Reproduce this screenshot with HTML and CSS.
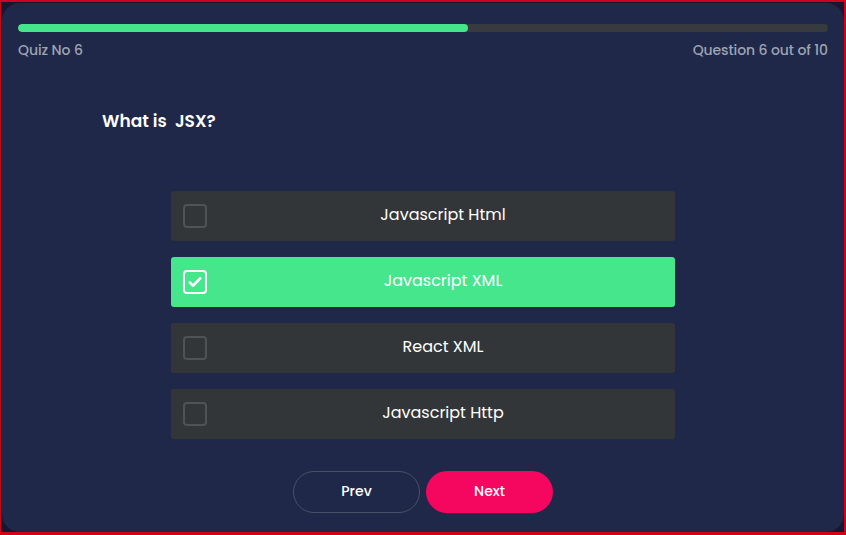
FILE: index.html
```html
<!DOCTYPE html>
<html>
<head>
<meta charset="utf-8">
<link rel="stylesheet" href="styles.css">
</head>
<body>
<div class="frame">
  <div class="card">
    <div class="progress"><div class="progress-fill" style="width:55.6%"></div></div>
    <div class="meta">
      <span>Quiz No 6</span>
      <span>Question 6 out of 10</span>
    </div>
    <h2 class="question">What is&nbsp; JSX?</h2>
    <div class="options">
      <div class="option"><span class="box"></span><span class="label">Javascript Html</span></div>
      <div class="option selected"><span class="box"><svg viewBox="0 0 24 24" width="18" height="18"><path d="M5 12.5l4.5 4.5L19 7" fill="none" stroke="#fff" stroke-width="3.4" stroke-linecap="round" stroke-linejoin="round"/></svg></span><span class="label">Javascript XML</span></div>
      <div class="option"><span class="box"></span><span class="label">React XML</span></div>
      <div class="option"><span class="box"></span><span class="label">Javascript Http</span></div>
    </div>
    <div class="nav">
      <button class="btn prev">Prev</button>
      <button class="btn next">Next</button>
    </div>
  </div>
</div>
</body>
</html>
```
FILE: styles.css
```css
html, body {
  margin: 0;
  padding: 0;
  background: #131935;
}
body {
  font-family: "Poppins", "Inter", "Open Sans", sans-serif;
}
.frame {
  width: 846px;
  height: 535px;
  box-sizing: border-box;
  border-style: solid;
  border-color: #d0021b;
  border-width: 2px 2px 3px 1px;
  padding: 1px 0 0 1px;
  background: #131935;
}
.card {
  height: 529px;
  width: 842px;
  box-sizing: border-box;
  background: #1f2848;
  border-radius: 18px;
  padding: 21px 16px 0 16px;
  display: flex;
  flex-direction: column;
}
.progress {
  height: 8px;
  border-radius: 4px;
  background: #373b3f;
  overflow: hidden;
}
.progress-fill {
  height: 100%;
  background: #45e58b;
  border-radius: 4px;
}
.meta {
  display: flex;
  justify-content: space-between;
  margin-top: 8px;
  font-size: 14px;
  font-weight: 500;
  color: #9ea3b3;
  line-height: 20px;
  letter-spacing: -0.1px;
}
.question {
  margin: 49px 0 0 84px;
  font-size: 17px;
  font-weight: 600;
  color: #ffffff;
  line-height: 24px;
  white-space: pre;
}
.options {
  margin: 58px auto 0;
  width: 504px;
  display: flex;
  flex-direction: column;
  gap: 16px;
}
.option {
  height: 50px;
  background: #333639;
  border-radius: 3px;
  display: flex;
  align-items: center;
  padding: 0 12px;
}
.option.selected {
  background: #46e68c;
}
.box {
  width: 20px;
  height: 20px;
  border: 2px solid #4f5256;
  border-radius: 4px;
  display: flex;
  align-items: center;
  justify-content: center;
  flex: none;
}
.selected .box {
  border-color: #ffffff;
}
.label {
  flex: 1;
  text-align: center;
  color: #ffffff;
  font-size: 16px;
  line-height: 24px;
  padding-left: 16px;
  padding-bottom: 3px;
}
.nav {
  margin-top: 32px;
  display: flex;
  justify-content: center;
  gap: 6px;
}
.btn {
  width: 127px;
  height: 42px;
  border-radius: 21px;
  font-family: inherit;
  font-size: 14px;
  font-weight: 500;
  color: #ffffff;
  padding: 0 0 2px;
  cursor: pointer;
}
.prev {
  background: transparent;
  border: 1px solid #495069;
}
.next {
  background: #f5065f;
  border: none;
}
```
